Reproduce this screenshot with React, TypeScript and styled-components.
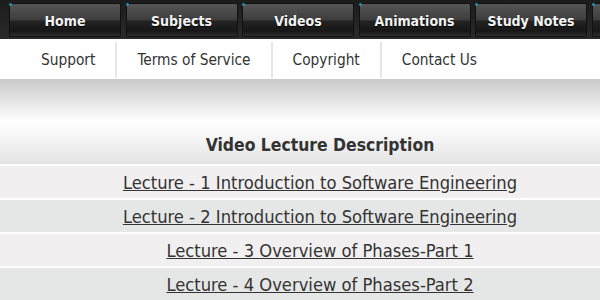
import styled, { createGlobalStyle } from "styled-components";

const Global = createGlobalStyle`
  html, body {
    margin: 0;
    padding: 0;
    background: #ffffff;
    overflow: hidden;
  }
  body {
    font-family: "DejaVu Sans Condensed", "DejaVu Sans", sans-serif;
    color: #333;
  }
`;

const Page = styled.div`
  width: 640px;
`;

const TopNav = styled.nav`
  height: 39px;
  background: linear-gradient(#1c1c1c, #2a2a2a);
  display: flex;
  gap: 4.5px;
  padding: 3px 0 0 9px;
  box-sizing: border-box;
`;

const Tab = styled.a`
  position: relative;
  width: 112px;
  height: 34px;
  flex: none;
  box-sizing: border-box;
  border: 1px solid #111;
  border-radius: 2px;
  background: linear-gradient(
    #555555 0%,
    #3e3e3e 48%,
    #222222 55%,
    #171717 85%,
    #2e2e2e 100%
  );
  color: #f4f4f4;
  font-weight: bold;
  font-size: 14px;
  text-align: center;
  line-height: 34px;
  text-shadow: 0 1px 1px #000;
  text-decoration: none;

  &::before {
    content: "";
    position: absolute;
    left: -1px;
    top: -1px;
    width: 3px;
    height: 3px;
    border-radius: 50%;
    background: #2a8fb0;
  }
`;

const SubNav = styled.nav`
  height: 40px;
  display: flex;
  align-items: stretch;
  padding: 3px 0 1px 21px;
  box-sizing: border-box;
  background: #fff;
`;

const SubLink = styled.a`
  padding: 0 20px;
  font-size: 15.3px;
  line-height: 36px;
  color: #333;
  text-decoration: none;
  border-right: 2px solid #e6e6e6;

  &:last-child {
    border-right: none;
  }
`;

const Banner = styled.div`
  height: 85px;
  background: linear-gradient(#c9c9c9 0%, #f4f4f4 40%, #ffffff 50%, #f2f2f2 75%, #e3e3e3 100%);
  display: flex;
  align-items: flex-end;
  justify-content: center;
  padding-bottom: 9px;
  box-sizing: border-box;
`;

const Heading = styled.h2`
  margin: 0;
  font-size: 17.4px;
  font-weight: bold;
  color: #333;
`;

const List = styled.div`
  display: flex;
  flex-direction: column;
`;

const Row = styled.div<{ $alt?: boolean }>`
  height: 32px;
  border-top: 2px solid #fff;
  background: ${p => (p.$alt ? "#e5e7e6" : "#f1efef")};
  display: flex;
  align-items: center;
  justify-content: center;
`;

const Lecture = styled.a`
  font-size: 18.2px;
  color: #333;
  text-decoration: underline;
`;

const tabs = ["Home", "Subjects", "Videos", "Animations", "Study Notes", ""];
const links = ["Support", "Terms of Service", "Copyright", "Contact Us"];
const lectures = [
  "Lecture - 1 Introduction to Software Engineering",
  "Lecture - 2 Introduction to Software Engineering",
  "Lecture - 3 Overview of Phases-Part 1",
  "Lecture - 4 Overview of Phases-Part 2",
];

const App = () => (
  <Page>
    <Global />
    <TopNav>
      {tabs.map((t, i) => (
        <Tab key={i} href="#">
          {t}
        </Tab>
      ))}
    </TopNav>
    <SubNav>
      {links.map(l => (
        <SubLink key={l} href="#">
          {l}
        </SubLink>
      ))}
    </SubNav>
    <Banner>
      <Heading>Video Lecture Description</Heading>
    </Banner>
    <List>
      {lectures.map((l, i) => (
        <Row key={l} $alt={i % 2 === 1}>
          <Lecture href="#">{l}</Lecture>
        </Row>
      ))}
    </List>
  </Page>
);

export default App;
